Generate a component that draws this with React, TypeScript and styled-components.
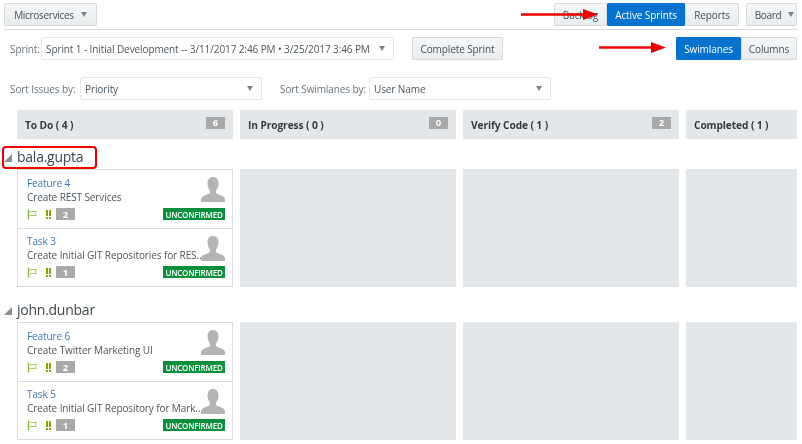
import React from 'react';
import styled, { createGlobalStyle, css } from 'styled-components';

const GlobalStyle = createGlobalStyle`
  html, body {
    margin: 0;
    padding: 0;
    background: #fff;
    width: 802px;
    height: 444px;
    overflow: hidden;
  }
  body {
    font-family: "Open Sans", "Noto Sans", sans-serif;
    font-size: 10px;
    letter-spacing: -0.1px;
    color: #3f4a52;
  }
`;

const Page = styled.div`
  position: relative;
  width: 797px;
  height: 444px;
  overflow: hidden;
  box-sizing: border-box;
  padding: 3px 0 0 4px;
  filter: blur(0.3px);
`;
const TopBar = styled.div`
  display: flex;
  justify-content: space-between;
  align-items: flex-start;
  height: 26px;
  border-bottom: 1px solid #d9dee1;
`;
const Group = styled.div`
  display: flex;
  align-items: center;
`;
const Button = styled.div<{ $active?: boolean; $width: number; $gapLeft?: number }>`
  display: flex;
  align-items: center;
  justify-content: center;
  box-sizing: border-box;
  height: 23px;
  width: ${p => p.$width}px;
  margin-left: ${p => p.$gapLeft ?? 0}px;
  white-space: nowrap;
  border: 1px solid #d5dadd;
  border-radius: 1px;
  ${p =>
    p.$active
      ? css`
          background: #0572ce;
          border-color: #0572ce;
          color: #fff;
        `
      : css`
          background: linear-gradient(#f5f6f7, #e9ecee);
          color: #44505a;
        `}
`;
const MenuButton = styled(Button)<{ $padLeft?: number }>`
  gap: 7px;
  letter-spacing: -0.3px;
  padding-left: ${p => p.$padLeft ?? 0}px;
`;
const Caret = styled.span`
  width: 0;
  height: 0;
  border-left: 3.5px solid transparent;
  border-right: 3.5px solid transparent;
  border-top: 5px solid #78838b;
`;
const SprintRow = styled.div`
  display: flex;
  align-items: center;
  height: 23px;
  margin-top: 7px;
  padding-left: 6px;
`;
const SortRow = styled.div`
  display: flex;
  align-items: center;
  height: 23px;
  margin-top: 17px;
  padding-left: 6px;
`;
const Label = styled.span<{ $width: number; $gapLeft?: number }>`
  color: #68737b;
  flex: 0 0 ${p => p.$width}px;
  margin-left: ${p => p.$gapLeft ?? 0}px;
  white-space: nowrap;
`;
const Select = styled.div<{ $width: number }>`
  display: flex;
  align-items: center;
  justify-content: space-between;
  box-sizing: border-box;
  flex: 0 0 ${p => p.$width}px;
  height: 23px;
  padding: 0 8px 0 4px;
  border: 1px solid #e3e6e8;
  border-radius: 2px;
  color: #4a555d;
  white-space: nowrap;
`;
const Spacer = styled.div`
  flex: 1;
`;
const Columns = styled.div`
  display: flex;
  gap: 7px;
  margin: 10px 0 0 13px;
`;
const ColumnHead = styled.div`
  flex: 0 0 216px;
  box-sizing: border-box;
  height: 29px;
  display: flex;
  align-items: center;
  justify-content: space-between;
  padding: 0 8px;
  background: #e4e7ea;
  font-size: 10.2px;
  font-weight: 700;
  color: #333b41;
  white-space: nowrap;
`;
const Count = styled.span`
  display: inline-flex;
  align-items: center;
  justify-content: center;
  width: 19px;
  height: 12px;
  margin-top: -4px;
  background: #a9a9a9;
  color: #fff;
  font-size: 9.5px;
  font-weight: 700;
`;
const Lane = styled.section<{ $top: number }>`
  margin-top: ${p => p.$top}px;
`;
const LaneTitle = styled.div`
  display: flex;
  align-items: center;
  box-sizing: border-box;
  height: 23px;
  padding: 0 0 2px 1px;
  font-size: 14px;
  letter-spacing: -0.25px;
  color: #3c464d;
  gap: 5px;
  margin-left: -1px;
`;
const Triangle = styled.span`
  width: 0;
  height: 0;
  margin-top: 2px;
  border-left: 8px solid transparent;
  border-bottom: 8px solid #8a9094;
`;
const LaneBody = styled.div`
  display: flex;
  gap: 7px;
  margin-left: 13px;
`;
const CardList = styled.div`
  flex: 0 0 216px;
  box-sizing: border-box;
  height: 118px;
  border: 1px solid #d9dcde;
`;
const Card = styled.div`
  position: relative;
  box-sizing: border-box;
  height: 58px;
  padding: 6px 7px 0 9px;
  & + & {
    border-top: 1px solid #d9dcde;
    padding-top: 5px;
  }
`;
const CardTitle = styled.div`
  line-height: 14px;
  color: #3c77b3;
`;
const CardText = styled.div`
  line-height: 14px;
  color: #4b555c;
  white-space: nowrap;
`;
const CardMeta = styled.div`
  display: flex;
  align-items: center;
  margin-top: 4px;
`;
const FlagGap = styled.span`
  width: 7px;
`;
const Points = styled.span`
  display: flex;
  align-items: center;
  justify-content: center;
  width: 19px;
  height: 12px;
  margin-left: 4px;
  background: #a9a9a9;
  color: #fff;
  font-size: 9.5px;
  font-weight: 700;
`;
const Status = styled.span`
  margin-left: auto;
  height: 12px;
  width: 62px;
  display: flex;
  align-items: center;
  justify-content: center;
  background: #0a8f3c;
  color: #fff;
  font-size: 8px;
  letter-spacing: -0.2px;
  font-weight: 600;
`;
const Avatar = styled.svg`
  position: absolute;
  top: 7px;
  right: 7px;
`;
const Empty = styled.div`
  flex: 0 0 216px;
  height: 118px;
  background: #e4e7ea;
`;
const Callout = styled.div`
  position: absolute;
  left: 2px;
  top: 146px;
  width: 95px;
  height: 23px;
  box-sizing: border-box;
  border: 2.5px solid #ee0000;
  border-radius: 4px;
`;
const Arrow = styled.svg<{ $left: number; $top: number }>`
  position: absolute;
  left: ${p => p.$left}px;
  top: ${p => p.$top}px;
`;

const FlagIcon = () => (
  <svg width="11" height="11" viewBox="0 0 11 11" fill="none">
    <path d="M1.5 0.5V10.5" stroke="#8cb63c" strokeWidth="1.4" />
    <path d="M2.5 2.5H9.5L8 4.5L9.5 6.5H2.5" stroke="#a8cc70" strokeWidth="1" />
  </svg>
);

const PriorityIcon = () => (
  <svg width="7" height="11" viewBox="0 0 7 11">
    <path d="M1 1H3V7H1ZM4 1H6V7H4ZM1 8H3V10H1ZM4 8H6V10H4Z" fill="#7ca800" />
  </svg>
);

const PersonIcon = () => (
  <Avatar width="24" height="25" viewBox="0 0 24 25">
    <path
      d="M12 0C8.5 0 6.5 2.6 6.5 6.5C6.5 9.5 7.6 12 9 13.5V15.5C9 16.5 7.5 17 5 18C2 19.2 0 20 0 22.5V25H24V22.5C24 20 22 19.2 19 18C16.5 17 15 16.5 15 15.5V13.5C16.4 12 17.5 9.5 17.5 6.5C17.5 2.6 15.5 0 12 0Z"
      fill="#b4b4b4"
    />
  </Avatar>
);

const RedArrow: React.FC<{ left: number; top: number; width: number }> = ({ left, top, width }) => (
  <Arrow $left={left} $top={top} width={width} height="11" viewBox={`0 0 ${width} 11`}>
    <path d={`M0 4.2H${width - 15}V0L${width} 5.5L${width - 15} 11V6.8H0Z`} fill="#ee0000" />
  </Arrow>
);

type Issue = { title: string; text: string; points: number };

const IssueCard: React.FC<Issue> = ({ title, text, points }) => (
  <Card>
    <CardTitle>{title}</CardTitle>
    <CardText>{text}</CardText>
    <CardMeta>
      <FlagIcon />
      <FlagGap />
      <PriorityIcon />
      <Points>{points}</Points>
      <Status>UNCONFIRMED</Status>
    </CardMeta>
    <PersonIcon />
  </Card>
);

const SwimLane: React.FC<{ name: string; top: number; issues: Issue[] }> = ({ name, top, issues }) => (
  <Lane $top={top}>
    <LaneTitle>
      <Triangle />
      {name}
    </LaneTitle>
    <LaneBody>
      <CardList>
        {issues.map(i => (
          <IssueCard key={i.title} {...i} />
        ))}
      </CardList>
      <Empty />
      <Empty />
      <Empty />
    </LaneBody>
  </Lane>
);

const App: React.FC = () => (
  <Page>
    <GlobalStyle />
    <TopBar>
      <MenuButton $width={93}>
        Microservices <Caret />
      </MenuButton>
      <Group>
        <Button $width={53}>Backlog</Button>
        <Button $active $width={78}>
          Active Sprints
        </Button>
        <Button $width={54}>Reports</Button>
        <MenuButton $width={51} $gapLeft={7} $padLeft={6}>
          Board <Caret />
        </MenuButton>
      </Group>
    </TopBar>
    <SprintRow>
      <Label $width={31}>Sprint:</Label>
      <Select $width={353}>
        Sprint 1 - Initial Development -- 3/11/2017 2:46 PM • 3/25/2017 3:46 PM
        <Caret />
      </Select>
      <Button $width={91} $gapLeft={18}>
        Complete Sprint
      </Button>
      <Spacer />
      <Button $active $width={65}>
        Swimlanes
      </Button>
      <Button $width={56}>Columns</Button>
    </SprintRow>
    <SortRow>
      <Label $width={70}>Sort Issues by:</Label>
      <Select $width={182}>
        Priority
        <Caret />
      </Select>
      <Label $width={89} $gapLeft={18}>
        Sort Swimlanes by:
      </Label>
      <Select $width={182}>
        User Name
        <Caret />
      </Select>
    </SortRow>
    <Columns>
      <ColumnHead>
        To Do ( 4 )<Count>6</Count>
      </ColumnHead>
      <ColumnHead>
        In Progress ( 0 )<Count>0</Count>
      </ColumnHead>
      <ColumnHead>
        Verify Code ( 1 )<Count>2</Count>
      </ColumnHead>
      <ColumnHead>Completed ( 1 )</ColumnHead>
    </Columns>
    <SwimLane
      name="bala.gupta"
      top={7}
      issues={[
        { title: 'Feature 4', text: 'Create REST Services', points: 2 },
        { title: 'Task 3', text: 'Create Initial GIT Repositories for RES..', points: 1 },
      ]}
    />
    <SwimLane
      name="john.dunbar"
      top={12}
      issues={[
        { title: 'Feature 6', text: 'Create Twitter Marketing UI', points: 2 },
        { title: 'Task 5', text: 'Create Initial GIT Repository for Mark...', points: 1 },
      ]}
    />
    <Callout />
    <RedArrow left={521} top={9} width={77} />
    <RedArrow left={599} top={42} width={67} />
  </Page>
);

export default App;
